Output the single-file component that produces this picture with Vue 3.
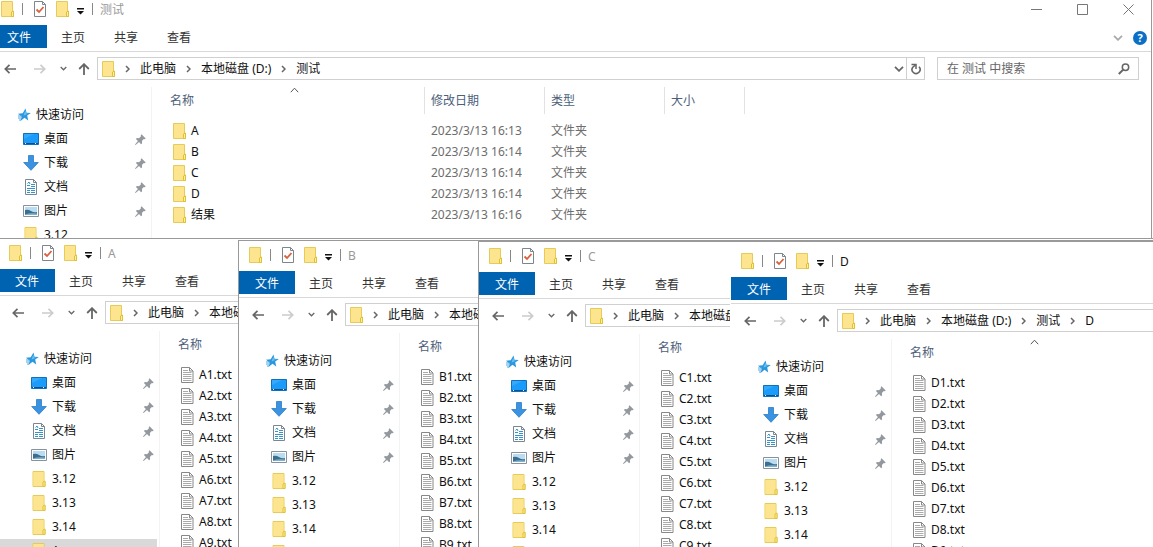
<script setup>
const pinned = [
  { label: '桌面', icon: 'desktop' },
  { label: '下载', icon: 'download' },
  { label: '文档', icon: 'document' },
  { label: '图片', icon: 'picture' }
]
const recent = ['3.12', '3.13', '3.14', 'A']
const tabs = ['主页', '共享', '查看']

const textFiles = (letter) =>
  Array.from({ length: 9 }, (_, i) => ({ name: `${letter}${i + 1}.txt`, icon: 'text' }))

const folders = [
  ['A', '2023/3/13 16:13'],
  ['B', '2023/3/13 16:14'],
  ['C', '2023/3/13 16:14'],
  ['D', '2023/3/13 16:14'],
  ['结果', '2023/3/13 16:16']
].map(([name, date]) => ({ name, date, icon: 'folder', type: '文件夹' }))

const base = ['此电脑', '本地磁盘 (D:)', '测试']
const windows = [
  { id: 'main', title: '测试', path: base, files: folders, full: true },
  ...['A', 'B', 'C', 'D'].map((l) => ({
    id: l.toLowerCase(),
    title: l,
    path: l === 'D' ? [...base, l] : base.slice(0, 2),
    files: textFiles(l),
    full: false
  }))
]
</script>

<template>
  <main class="desktop">
    <svg class="defs" aria-hidden="true">
      <symbol id="folder" viewBox="0 0 13 16">
        <path d="M.5.5h11v10h1v5H.5z" fill="#fbe88c" stroke="#e6cb58" />
        <path d="M1 1h10v9L9 15H1z" fill="#fce58e" />
        <path d="M10.500 15.500v-4.500l2-1v5.500z" fill="#fff09a" stroke="#dfc036" />
      </symbol>
      <symbol id="check" viewBox="0 0 12 16">
        <path d="M.5.5h8l3 3v12H.5z" fill="#fff" stroke="#7d858d" />
        <path d="M8.500.5v3h3" fill="none" stroke="#7d858d" />
        <path d="M2.500 8.500l2.500 2.500 4.500-5" fill="none" stroke="#d9623c" stroke-width="1.800" />
      </symbol>
      <symbol id="customize" viewBox="0 0 7 7">
        <path d="M0 0h7v1.500H0zM0 3h7L3.500 6.500z" fill="#111" />
      </symbol>
      <symbol id="left" viewBox="0 0 12 10">
        <path d="M12 5H1.500M5.500.8L1.300 5l4.200 4.200" fill="none" stroke="currentColor" stroke-width="1.700" />
      </symbol>
      <symbol id="right" viewBox="0 0 12 10">
        <path d="M0 5h10.500M6.500.8L10.700 5 6.500 9.200" fill="none" stroke="currentColor" stroke-width="1.700" />
      </symbol>
      <symbol id="up" viewBox="0 0 12 12">
        <path d="M6 12V1.500M1.200 6L6 1.200 10.800 6" fill="none" stroke="currentColor" stroke-width="1.800" />
      </symbol>
      <symbol id="down" viewBox="0 0 10 6">
        <path d="M1 .8l4 4 4-4" fill="none" stroke="currentColor" stroke-width="1.800" />
      </symbol>
      <symbol id="next" viewBox="0 0 5 8">
        <path d="M1 1l3 3-3 3" fill="none" stroke="#666" stroke-width="1.500" />
      </symbol>
      <symbol id="sort" viewBox="0 0 9 6">
        <path d="M.8 5.200L4.500 1.200l3.700 4" fill="none" stroke="#555" />
      </symbol>
      <symbol id="refresh" viewBox="0 0 10 12">
        <path d="M8 3.800A4 4 0 1 1 1.800 4.200L4.500 2" fill="none" stroke="#666" stroke-width="1.600" />
        <path d="M.5 1.500h4.500v4.500" fill="none" stroke="#666" stroke-width="1.500" />
      </symbol>
      <symbol id="search" viewBox="0 0 12 12">
        <circle cx="7.500" cy="4.300" r="3.200" fill="none" stroke="#666" stroke-width="1.500" />
        <path d="M5.200 6.600L.8 11" stroke="#666" stroke-width="2" />
      </symbol>
      <symbol id="min" viewBox="0 0 11 11"><path d="M0 5.500h11" stroke="#777" /></symbol>
      <symbol id="max" viewBox="0 0 11 11"><path d="M.5.5h10v10H.5z" fill="none" stroke="#777" /></symbol>
      <symbol id="close" viewBox="0 0 11 11"><path d="M.5.5l10 10M10.500.5l-10 10" stroke="#777" /></symbol>
      <symbol id="star" viewBox="0 0 14 14">
        <path d="M8.500.5l1 4.200 4.300.2-3.600 2.700 1 4.800-3.700-2.600L3.500 13l1.200-4.300L1 5.800l4.700-.6z" fill="#2a97dd" />
        <path d="M1 8h4M1 10h3.500M2 12h2" stroke="#4aa6e2" />
        <path d="M8.400 2.500l.6 3 2.500.1-5 2z" fill="#6cc3f5" />
      </symbol>
      <symbol id="desktop" viewBox="0 0 16 12">
        <path d="M.5.5h15v11H.5z" fill="#1b9bfa" stroke="#1170bb" />
        <path d="M1 6L11 1H1z" fill="#35aafc" />
        <path d="M1 10.500h11M13 10.500h2" stroke="#0c4f8d" />
        <path d="M2 10.500h1M12 10.500h1" stroke="#fff" />
      </symbol>
      <symbol id="download" viewBox="0 0 16 16">
        <path d="M5.500.5h5v7h4.800L8 15.300.7 7.500h4.800z" fill="#3b92e0" stroke="#2a7cc9" stroke-width=".8" />
      </symbol>
      <symbol id="document" viewBox="0 0 16 16">
        <path d="M2.500.5h8l3 3v12h-11z" fill="#fff" stroke="#7b868e" />
        <path d="M10.500.5v3h3" fill="none" stroke="#7b868e" />
        <path d="M4 6.500h3M8 5.500h4M8 7.500h4M4 9.500h8M4 11.500h3M8 11.500h4M4 13.500h3M8 13.500h4" stroke="#3493cc" />
        <path d="M4.500 4.500L6 3l1 2" fill="none" stroke="#3493cc" />
      </symbol>
      <symbol id="picture" viewBox="0 0 16 12">
        <path d="M.5.5h15v11H.5z" fill="#fff" stroke="#88929c" />
        <path d="M2 2h12v8H2z" fill="#b9dcf1" />
        <path d="M2 5q3-1 6 1t6 1v3H2z" fill="#3c6f8f" />
        <path d="M2 9.500q5-2 12-1V10H2z" fill="#7fb2cc" />
      </symbol>
      <symbol id="pin" viewBox="0 0 11 11">
        <path d="M6.500.3l4.200 4.200-1 .8-.9-.2-1.900 2 .2 2.100-1 1L4 8.100.6 11l-.6-.6L2.900 7 .9 5l1-1 2.100.2 2-1.900-.3-1z" fill="#92989e" />
      </symbol>
      <symbol id="text" viewBox="0 0 13 16">
        <path d="M.5.5h8l3.500 3.500v11.500H.5z" fill="#fff" stroke="#888" />
        <path d="M8.500.5V4H12" fill="none" stroke="#888" />
        <path d="M2 3.500h5M2 5.500h8.500M2 7.500h8.500M2 9.500h8.500M2 11.500h8.500M2 13.500h8.500" stroke="#aaa" />
      </symbol>
    </svg>

    <section v-for="w in windows" :key="w.id" class="window" :class="'win-' + w.id" :aria-label="w.title">
      <header class="titlebar">
        <svg class="i13"><use href="#folder" /></svg>
        <i class="bar"></i>
        <button class="plain check" aria-label="属性"><svg class="i12"><use href="#check" /></svg></button>
        <button class="plain new" aria-label="新建文件夹"><svg class="i13"><use href="#folder" /></svg></button>
        <button class="plain custom" aria-label="自定义"><svg class="i7"><use href="#customize" /></svg></button>
        <i class="bar"></i>
        <span class="title">{{ w.title }}</span>
        <div v-if="w.full" class="controls">
          <button class="plain" aria-label="最小化"><svg class="i11"><use href="#min" /></svg></button>
          <button class="plain" aria-label="最大化"><svg class="i11"><use href="#max" /></svg></button>
          <button class="plain" aria-label="关闭"><svg class="i11"><use href="#close" /></svg></button>
        </div>
      </header>

      <nav class="ribbon">
        <button class="plain tab file">文件</button>
        <button v-for="t in tabs" :key="t" class="plain tab">{{ t }}</button>
        <div v-if="w.full" class="ribbon-end">
          <button class="plain expand" aria-label="展开功能区"><svg class="chev"><use href="#down" /></svg></button>
          <button class="plain help" aria-label="帮助">?</button>
        </div>
      </nav>

      <div class="address-row">
        <button class="plain back" aria-label="后退"><svg class="arrow"><use href="#left" /></svg></button>
        <button class="plain forward" aria-label="前进"><svg class="arrow"><use href="#right" /></svg></button>
        <button class="plain history" aria-label="最近位置"><svg class="mini"><use href="#down" /></svg></button>
        <button class="plain parent" aria-label="上移"><svg class="i12 up"><use href="#up" /></svg></button>
        <div class="address">
          <svg class="i13"><use href="#folder" /></svg>
          <template v-for="p in w.path" :key="p">
            <svg class="next"><use href="#next" /></svg>
            <button class="plain crumb">{{ p }}</button>
          </template>
          <template v-if="w.full">
            <button class="plain drop" aria-label="以前的位置"><svg class="chev"><use href="#down" /></svg></button>
            <button class="plain refresh" aria-label="刷新"><svg class="i10"><use href="#refresh" /></svg></button>
          </template>
        </div>
        <label v-if="w.full" class="search">
          <input type="text" :placeholder="`在 ${w.title} 中搜索`" :aria-label="`在 ${w.title} 中搜索`" />
          <svg class="i12 glass"><use href="#search" /></svg>
        </label>
      </div>

      <div class="body">
        <ul class="side">
          <li class="quick"><svg class="i14"><use href="#star" /></svg>快速访问</li>
          <li v-for="p in pinned" :key="p.label">
            <svg class="i16"><use :href="'#' + p.icon" /></svg>{{ p.label }}
            <svg class="i11 pin"><use href="#pin" /></svg>
          </li>
          <li v-for="r in recent" :key="r" :class="{ selected: r === w.title }">
            <svg class="i16"><use href="#folder" /></svg>{{ r }}
          </li>
        </ul>
        <table class="files" :class="{ full: w.full }">
          <thead>
            <tr>
              <th class="name">名称<svg class="sort"><use href="#sort" /></svg></th>
              <template v-if="w.full">
                <th class="date">修改日期</th>
                <th class="type">类型</th>
                <th class="size">大小</th>
              </template>
            </tr>
          </thead>
          <tbody>
            <tr v-for="f in w.files" :key="f.name">
              <td><div class="entry"><svg class="i13"><use :href="'#' + f.icon" /></svg>{{ f.name }}</div></td>
              <template v-if="w.full">
                <td class="muted">{{ f.date }}</td>
                <td class="muted">{{ f.type }}</td>
                <td></td>
              </template>
            </tr>
          </tbody>
        </table>
      </div>
    </section>
  </main>
</template>

<style>
body { background: #fff; }
</style>

<style scoped>
.desktop {
  position: relative;
  height: 100vh;
  overflow: hidden;
  font: 12px/16px "Noto Sans", "Noto Sans CJK SC", sans-serif;
  color: #111;
}
.desktop * { box-sizing: border-box; }
.defs { position: absolute; width: 0; height: 0; }
svg { display: block; flex: none; }
.plain {
  display: flex;
  align-items: center;
  justify-content: center;
  border: 0;
  padding: 0;
  background: none;
  color: inherit;
  font: inherit;
  white-space: nowrap;
}
.i7 { width: 7px; height: 7px; }
.i10 { width: 10px; height: 12px; }
.i11 { width: 11px; height: 11px; }
.i12 { width: 12px; height: 16px; }
.i13 { width: 13px; height: 16px; }
.i14 { width: 14px; height: 14px; }
.i16 { width: 16px; height: 16px; }
.up, .glass { height: 12px; }
.arrow { width: 12px; height: 10px; }
.chev { width: 10px; height: 6px; }
.mini { width: 7px; height: 5px; }
.next { width: 5px; height: 8px; }

.window {
  position: absolute;
  right: -20px;
  bottom: 0;
  display: flex;
  flex-direction: column;
  overflow: hidden;
  background: #fff;
  border: 0 solid #999;
}
.win-main { left: -9px; right: 1px; top: -5px; height: 243px; bottom: auto; border-right-width: 1px; }
.win-a { left: -1px; top: 238px; border-top-width: 1px; }
.win-b { left: 238px; top: 240px; border-width: 1px 0 0 1px; }
.win-c { left: 478px; top: 240px; border-width: 2px 0 0 1px; }
.win-d { left: 730px; top: 247px; border-left: 1px solid #fff; }

.titlebar {
  display: flex;
  align-items: center;
  flex: none;
  height: 30px;
  padding: 0 0 2px 10px;
}
.bar { width: 1px; height: 12px; margin-left: 8px; background: #888; }
.check { margin-left: 11px; }
.new { margin-left: 10px; }
.custom { margin: 4px 0 0 8px; }
.title { margin-left: 7px; padding-top: 2px; color: #999; }
.win-d .title { color: #111; }
.controls { display: flex; margin-left: auto; }
.controls .plain { width: 46px; height: 28px; }

.ribbon {
  display: flex;
  flex: none;
  height: 27px;
  border-bottom: 1px solid #d8d8d8;
}
.tab { width: 52px; height: 24px; margin-right: 1px; padding-top: 2px; color: #333; }
.tab.file { width: 56px; height: 23px; margin-right: 0; background: #0063b1; color: #fff; }
.ribbon-end { display: flex; align-items: center; gap: 10px; margin-left: auto; padding-right: 4px; }
.expand { color: #aaa; }
.help {
  width: 14px;
  height: 14px;
  border-radius: 50%;
  background: #0b6fc6;
  color: #fff;
  font-weight: 700;
  font-size: 11px;
}

.address-row {
  display: flex;
  flex: none;
  height: 35px;
  padding: 5px 12px 7px 13px;
  color: #666;
}
.forward { margin-left: 18px; color: #ccc; }
.history { margin-left: 14px; }
.parent { margin: 0 7px 0 11px; }
.address {
  display: flex;
  align-items: center;
  flex: 1;
  gap: 10px;
  min-width: 0;
  padding-left: 4px;
  border: 1px solid #d0d0d0;
}
.crumb { color: #111; }
.drop { margin-left: auto; margin-right: -8px; }
.refresh { width: 18px; height: 21px; border-left: 1px solid #d0d0d0; }
.search {
  display: flex;
  align-items: center;
  width: 202px;
  margin-left: 12px;
  padding: 0 8px 0 9px;
  border: 1px solid #d0d0d0;
}
.search input {
  flex: 1;
  min-width: 0;
  padding: 0;
  border: 0;
  outline: 0;
  background: none;
  font: inherit;
}
.search input::placeholder { color: #666; opacity: 1; }

.body { display: flex; flex: 1; min-height: 0; }
.side {
  flex: none;
  width: 161px;
  margin: 0;
  padding: 16px 2px 0 0;
  border-right: 1px solid #f3f3f3;
  list-style: none;
}
.side li {
  display: flex;
  align-items: center;
  gap: 5px;
  height: 24px;
  padding: 0 3px 0 32px;
}
.side .quick { gap: 5px; padding-left: 26px; }
.side .selected { background: #d9d9d9; }
.pin { margin-left: auto; }

.files {
  align-self: flex-start;
  flex: none;
  width: 261px;
  margin-left: 12px;
  table-layout: fixed;
  border-collapse: separate;
  border-spacing: 0;
}
.files.full { width: 581px; }
.files th {
  position: relative;
  height: 27px;
  padding: 0 0 0 6px;
  border-right: 1px solid #e2e2e2;
  color: #4c607a;
  font-weight: 400;
  text-align: left;
}
.name { width: 261px; }
.date, .type { width: 120px; }
.size { width: 80px; }
.sort { position: absolute; top: 0; left: 50%; width: 9px; height: 6px; margin-left: -4px; }
.files tbody::before { content: ""; display: block; height: 6px; }
.files td { height: 21px; padding: 0 0 0 6px; }
.entry { display: flex; align-items: center; gap: 5px; padding-left: 3px; }
.muted { color: #6d6d6d; }
</style>
